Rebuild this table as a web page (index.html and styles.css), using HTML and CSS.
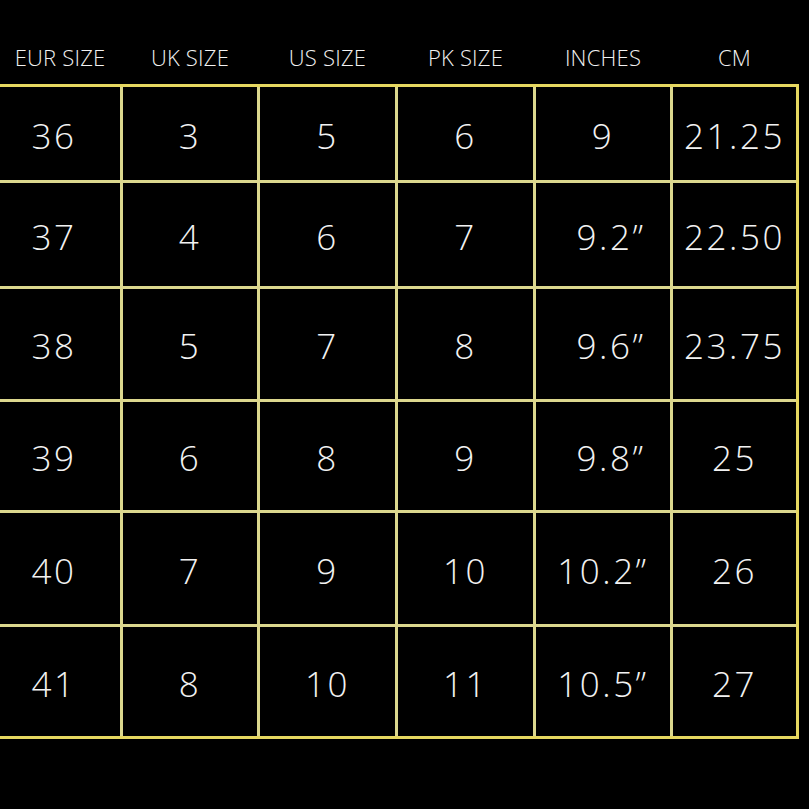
FILE: index.html
```html
<!DOCTYPE html>
<html>
<head>
<meta charset="utf-8">
<link rel="stylesheet" href="styles.css">
</head>
<body>
<div class="chart">
  <div class="head">
    <div class="hcell">EUR SIZE</div>
    <div class="hcell">UK SIZE</div>
    <div class="hcell">US SIZE</div>
    <div class="hcell">PK SIZE</div>
    <div class="hcell">INCHES</div>
    <div class="hcell">CM</div>
  </div>
  <div class="grid">
    <div class="cell first">36</div><div class="cell">3</div><div class="cell">5</div><div class="cell">6</div><div class="cell">9</div><div class="cell">21.25</div>
    <div class="cell first">37</div><div class="cell">4</div><div class="cell">6</div><div class="cell">7</div><div class="cell inch">9.2”</div><div class="cell">22.50</div>
    <div class="cell first">38</div><div class="cell">5</div><div class="cell">7</div><div class="cell">8</div><div class="cell inch">9.6”</div><div class="cell">23.75</div>
    <div class="cell first">39</div><div class="cell">6</div><div class="cell">8</div><div class="cell">9</div><div class="cell inch">9.8”</div><div class="cell">25</div>
    <div class="cell first">40</div><div class="cell">7</div><div class="cell">9</div><div class="cell">10</div><div class="cell">10.2”</div><div class="cell">26</div>
    <div class="cell first">41</div><div class="cell">8</div><div class="cell">10</div><div class="cell">11</div><div class="cell">10.5”</div><div class="cell">27</div>
  </div>
</div>
</body>
</html>
```
FILE: styles.css
```css
html, body {
  margin: 0;
  padding: 0;
  background: #000;
  height: 100%;
}
.chart {
  width: 809px;
  height: 809px;
  background: #000;
  font-family: "Open Sans", "DejaVu Sans", sans-serif;
  color: #f2f2f2;
}
.head {
  display: grid;
  grid-template-columns: 120px 134px 135px 135px 134px 123px;
  column-gap: 3px;
  height: 84px;
  padding-top: 30px;
  box-sizing: border-box;
  align-items: center;
}
.hcell {
  text-align: center;
  font-size: 22px;
  font-weight: 300;
  letter-spacing: 0.2px;
  line-height: 1;
  white-space: nowrap;
}
.grid {
  display: grid;
  width: max-content;
  grid-template-columns: 120px 134px 135px 135px 134px 123px;
  grid-template-rows: 93px 103px 110px 108px 111px 109px;
  gap: 3px;
  background: #dcd78e;
  border: 3px solid #e6d760;
  border-left: none;
}
.cell {
  background: #000;
  display: flex;
  align-items: center;
  justify-content: center;
  padding-top: 3px;
  box-sizing: border-box;
  font-size: 35px;
  font-weight: 300;
  letter-spacing: 2.5px;
  line-height: 1;
}
.first {
  padding-right: 12px;
}
.inch {
  padding-left: 16px;
}
```
